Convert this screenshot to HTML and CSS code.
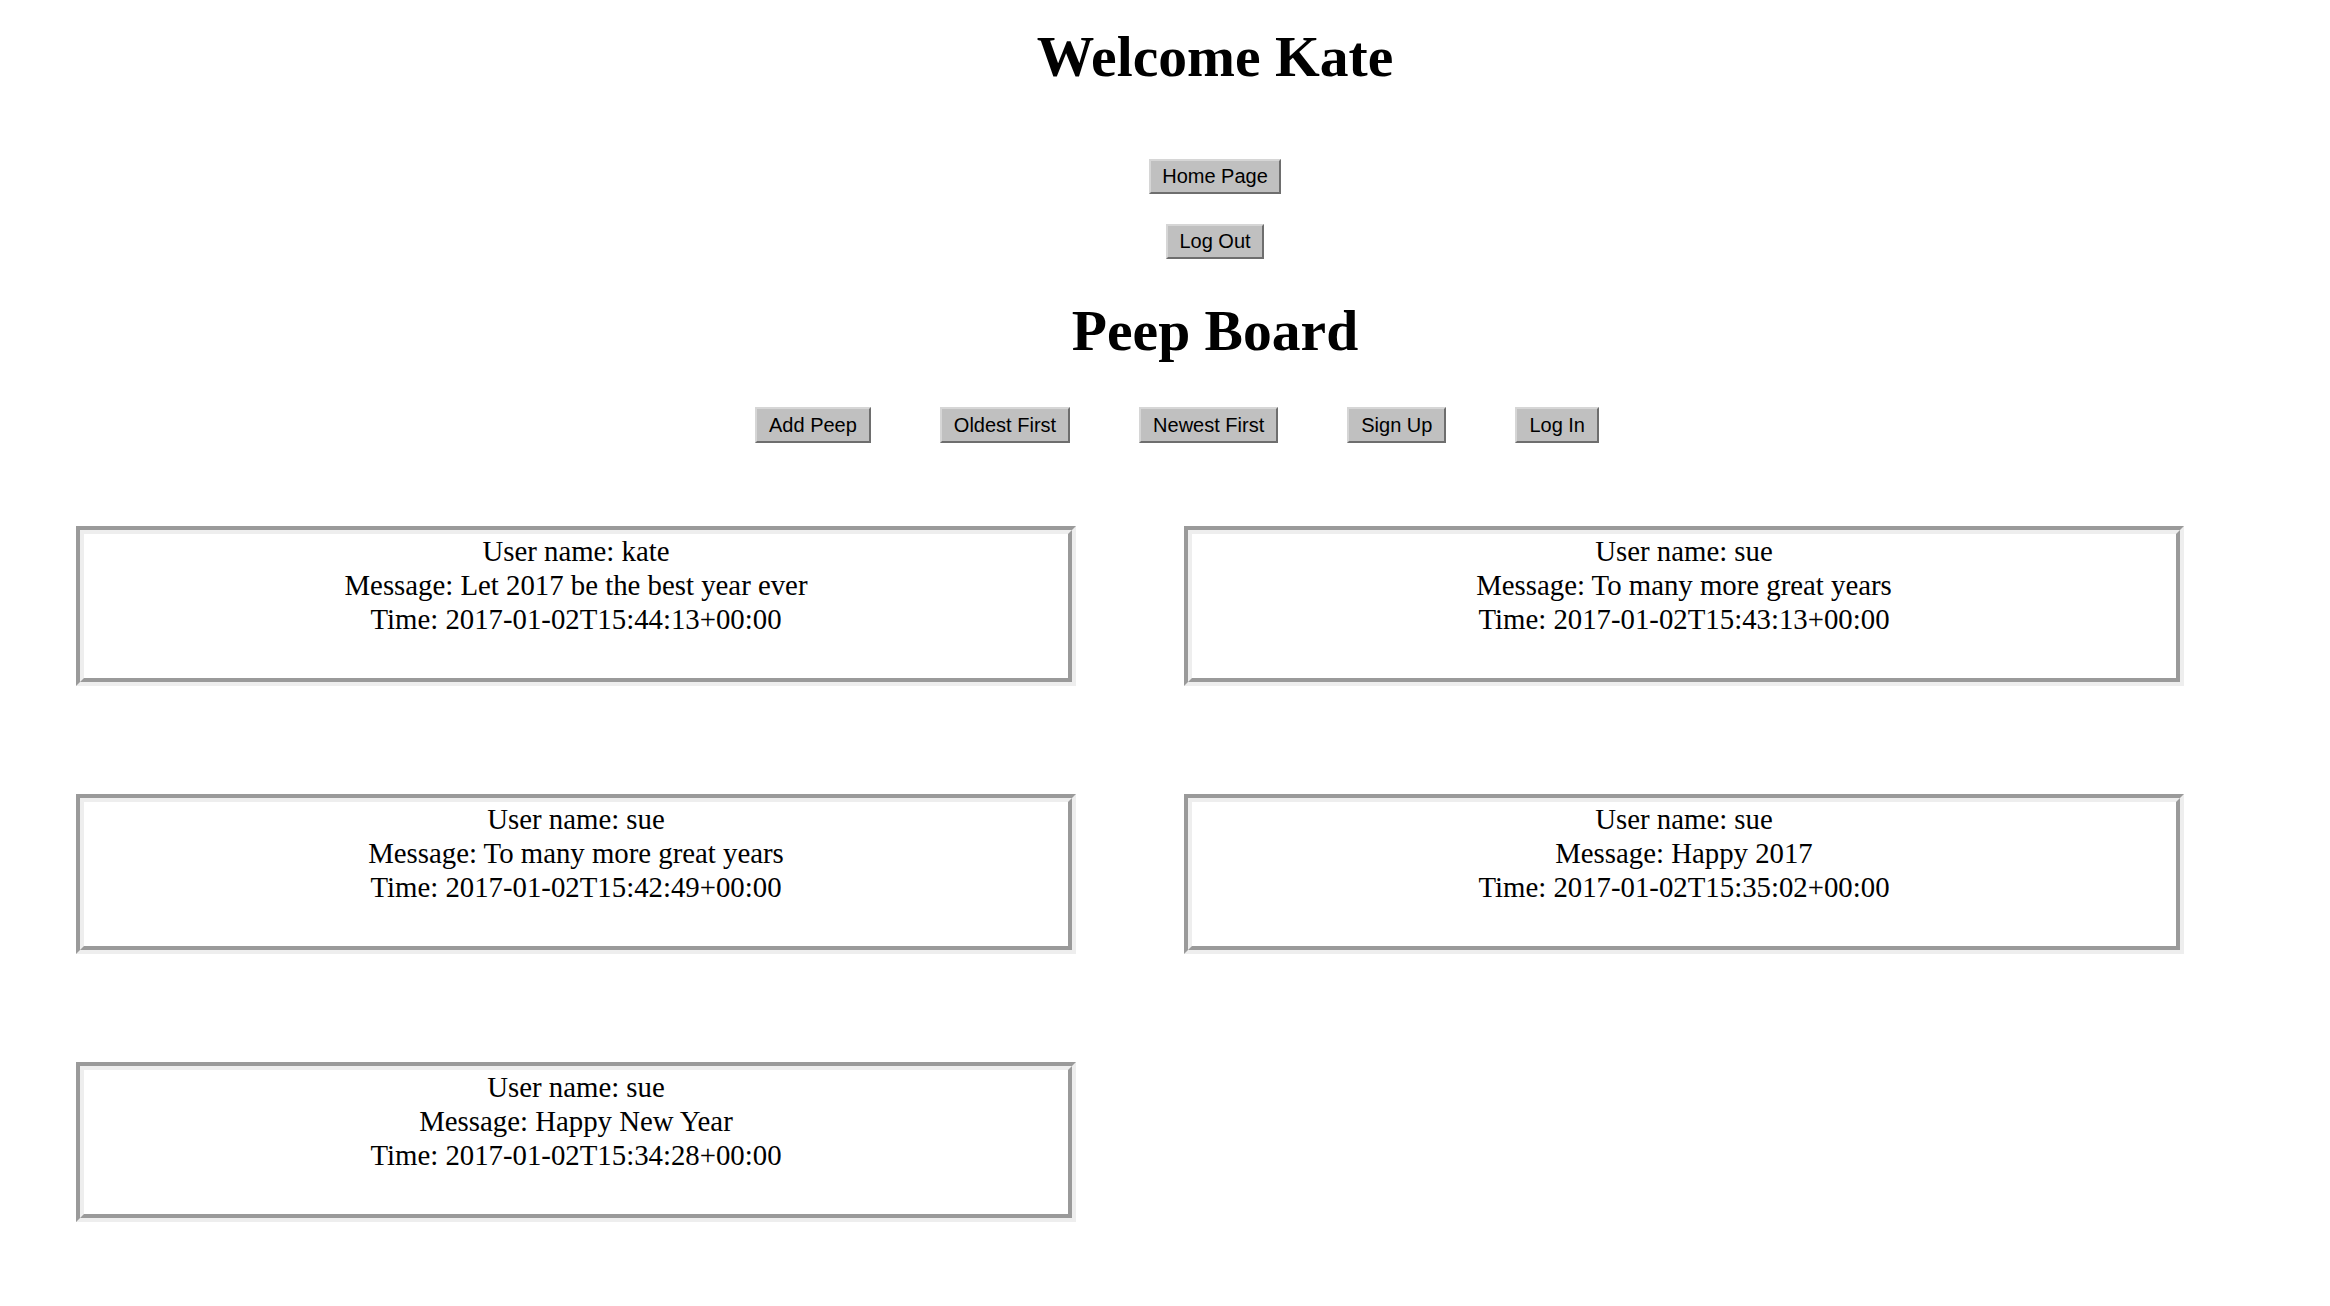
FILE: index.html
```html
<!DOCTYPE html>
<html lang="en">
<head>
<meta charset="utf-8">
<title>Peep Board</title>
<link rel="stylesheet" href="styles.css">
</head>
<body>
<header class="top">
  <h1 class="title welcome">Welcome Kate</h1>
  <div class="stack">
    <button class="btn home">Home Page</button>
    <button class="btn">Log Out</button>
  </div>
  <h1 class="title board">Peep Board</h1>
  <nav class="actions">
    <button class="btn">Add Peep</button>
    <button class="btn">Oldest First</button>
    <button class="btn">Newest First</button>
    <button class="btn">Sign Up</button>
    <button class="btn">Log In</button>
  </nav>
</header>
<main class="peeps">
  <div class="peep">User name: kate<br>Message: Let 2017 be the best year ever<br>Time: 2017-01-02T15:44:13+00:00</div>
  <div class="peep">User name: sue<br>Message: To many more great years<br>Time: 2017-01-02T15:43:13+00:00</div>
  <div class="peep">User name: sue<br>Message: To many more great years<br>Time: 2017-01-02T15:42:49+00:00</div>
  <div class="peep">User name: sue<br>Message: Happy 2017<br>Time: 2017-01-02T15:35:02+00:00</div>
  <div class="peep">User name: sue<br>Message: Happy New Year<br>Time: 2017-01-02T15:34:28+00:00</div>
</main>
</body>
</html>
```
FILE: styles.css
```css
html, body {
  margin: 0;
  padding: 0;
  background: #fff;
}
body {
  font-family: "Liberation Serif", "Times New Roman", serif;
  color: #000;
  overflow: hidden;
}
.top {
  padding: 25px 0 0 100px;
  text-align: center;
}
.title {
  margin: 0;
  font-size: 57.6px;
  line-height: 64px;
  font-weight: bold;
}
.stack {
  margin-top: 70px;
  display: flex;
  flex-direction: column;
  align-items: center;
  gap: 30px;
}
.board {
  margin-top: 40px;
}
.btn {
  font-family: "Liberation Sans", Arial, sans-serif;
  font-size: 20px;
  line-height: 23px;
  color: #000;
  background: #c0c0c0;
  border: 2px solid;
  border-color: #d6d6d6 #6e6e6e #6e6e6e #d6d6d6;
  border-radius: 0;
  padding: 4px 11px;
  margin: 0;
}
.actions {
  margin-top: 44px;
  display: flex;
  justify-content: center;
  gap: 69px;
  padding-right: 76px;
}
.actions .btn {
  padding: 5px 12px 4px;
}
.peeps {
  margin-top: 83px;
  padding-left: 76px;
  display: grid;
  grid-template-columns: 1000px 1000px;
  column-gap: 108px;
  row-gap: 108px;
}
.peep {
  box-sizing: border-box;
  height: 160px;
  border: 8px groove #eee;
  text-align: center;
  font-size: 28.8px;
  line-height: 34px;
}
```
